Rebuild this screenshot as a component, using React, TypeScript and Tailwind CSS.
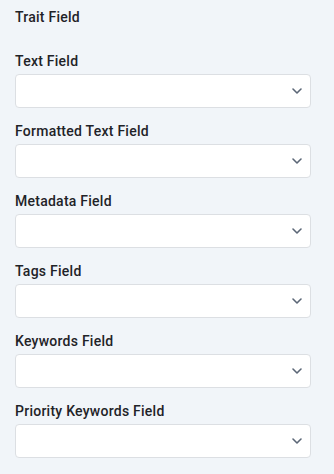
import React from "react";

const fields = [
  "Text Field",
  "Formatted Text Field",
  "Metadata Field",
  "Tags Field",
  "Keywords Field",
  "Priority Keywords Field",
];

const Chevron = () => (
  <svg width="12" height="12" viewBox="0 0 12 12" fill="none">
    <path d="M2 4l4 4 4-4" stroke="#5b6676" strokeWidth="1.6" strokeLinecap="round" strokeLinejoin="round" />
  </svg>
);

const App = () => {
  return (
    <div
      className="min-h-screen w-full bg-[#f1f5f9] pl-[15px] pt-[7px] text-[#1f2328]"
      style={{ fontFamily: "Roboto, 'Noto Sans', sans-serif" }}
    >
      <h3 className="text-[14px] leading-5 font-medium tracking-[0.25px]">Trait Field</h3>

      <div className="mt-[24px] flex flex-col gap-[13px]">
        {fields.map((f) => (
          <div key={f} className="flex flex-col gap-[3px]">
            <label className="text-[14px] leading-5 font-medium tracking-[0.25px]">{f}</label>
            <div className="flex h-[34px] w-[296px] items-center justify-end rounded-[4px] border border-[#dcdfe3] bg-white pr-[7px]">
              <Chevron />
            </div>
          </div>
        ))}
      </div>
    </div>
  );
};

export default App;
